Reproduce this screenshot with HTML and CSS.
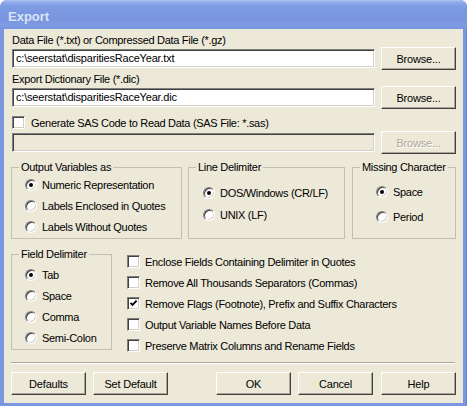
FILE: index.html
```html
<!DOCTYPE html>
<html>
<head>
<meta charset="utf-8">
<title>Export</title>
<link rel="stylesheet" href="styles.css">
</head>
<body>
<div class="window">
  <div class="titlebar"><span class="title">Export</span></div>
  <div class="frame">
    <div class="top">
      <div class="label">Data File (*.txt) or Compressed Data File (*.gz)</div>
      <div class="filerow">
        <div class="field">c:\seerstat\disparitiesRaceYear.txt</div>
        <div class="btn browse">Browse...</div>
      </div>
      <div class="label label2">Export Dictionary File (*.dic)</div>
      <div class="filerow">
        <div class="field">c:\seerstat\disparitiesRaceYear.dic</div>
        <div class="btn browse">Browse...</div>
      </div>
      <div class="check sas"><span class="box"></span><span>Generate SAS Code to Read Data (SAS File: *.sas)</span></div>
      <div class="filerow disrow">
        <div class="field disabled"></div>
        <div class="btn browse dis">Browse...</div>
      </div>
    </div>

    <div class="groups">
      <fieldset class="grp g-output">
        <legend>Output Variables as</legend>
        <div class="inner">
          <div class="opt"><span class="radio"><span class="dot"></span></span><span>Numeric Representation</span></div>
          <div class="opt"><span class="radio"></span><span>Labels Enclosed in Quotes</span></div>
          <div class="opt"><span class="radio"></span><span>Labels Without Quotes</span></div>
        </div>
      </fieldset>
      <fieldset class="grp g-line">
        <legend>Line Delimiter</legend>
        <div class="inner">
          <div class="opt"><span class="radio"><span class="dot"></span></span><span>DOS/Windows (CR/LF)</span></div>
          <div class="opt"><span class="radio"></span><span>UNIX (LF)</span></div>
        </div>
      </fieldset>
      <fieldset class="grp g-missing">
        <legend>Missing Character</legend>
        <div class="inner">
          <div class="opt"><span class="radio"><span class="dot"></span></span><span>Space</span></div>
          <div class="opt"><span class="radio"></span><span>Period</span></div>
        </div>
      </fieldset>
    </div>

    <div class="lower">
      <fieldset class="grp g-field">
        <legend>Field Delimiter</legend>
        <div class="inner">
          <div class="opt"><span class="radio"><span class="dot"></span></span><span>Tab</span></div>
          <div class="opt"><span class="radio"></span><span>Space</span></div>
          <div class="opt"><span class="radio"></span><span>Comma</span></div>
          <div class="opt"><span class="radio"></span><span>Semi-Colon</span></div>
        </div>
      </fieldset>
      <div class="checks">
        <div class="check"><span class="box"></span><span>Enclose Fields Containing Delimiter in Quotes</span></div>
        <div class="check"><span class="box"></span><span>Remove All Thousands Separators (Commas)</span></div>
        <div class="check"><span class="box"><svg width="9" height="9" viewBox="0 0 9 9"><polyline points="1.5,3.8 3.5,5.8 7.6,1.7" fill="none" stroke="#000" stroke-width="1.9"/></svg></span><span>Remove Flags (Footnote), Prefix and Suffix Characters</span></div>
        <div class="check"><span class="box"></span><span>Output Variable Names Before Data</span></div>
        <div class="check"><span class="box"></span><span>Preserve Matrix Columns and Rename Fields</span></div>
      </div>
    </div>

    <div class="sep"></div>

    <div class="buttons">
      <div class="btn">Defaults</div>
      <div class="btn">Set Default</div>
      <div class="btn ok">OK</div>
      <div class="btn">Cancel</div>
      <div class="btn help">Help</div>
    </div>
  </div>
</div>
</body>
</html>
```

FILE: styles.css
```css
html, body {
  margin: 0;
  padding: 0;
  background: #fff;
}
body {
  width: 467px;
  height: 406px;
  overflow: hidden;
  font-family: "Liberation Sans", Arial, sans-serif;
  font-size: 11px;
  letter-spacing: -0.3px;
  color: #000;
}
.window {
  width: 467px;
  height: 406px;
  display: flex;
  flex-direction: column;
  background: #7A96DF;
  border-radius: 7px 7px 0 0;
  overflow: hidden;
  box-shadow: inset -1px 0 0 #6A83D2;
}
.titlebar {
  height: 29px;
  flex: none;
  box-sizing: border-box;
  padding: 3px 0 0 8px;
  display: flex;
  align-items: center;
  background: linear-gradient(to bottom, #AFC3F2 0px, #95ADEC 2px, #81A0E6 5px, #7B98E1 10px, #7995DF 20px, #7F9BE3 25px, #7794DE 29px);
}
.title {
  font-family: "Liberation Sans", Arial, sans-serif;
  font-weight: bold;
  font-size: 13px;
  letter-spacing: 0;
  color: #D8E4F8;
}
.frame {
  flex: 1;
  margin: 0 4px 3px 4px;
  background: #ECE9D8;
  padding: 5px 7px 0 7px;
  display: flex;
  flex-direction: column;
}
.top {
  padding-left: 1px;
  display: flex;
  flex-direction: column;
}
.label {
  height: 13px;
  line-height: 13px;
}
.label2 {
  margin-top: 3px;
}
.filerow {
  display: flex;
  align-items: center;
  height: 23px;
  gap: 6px;
}
.field {
  box-sizing: border-box;
  width: 363px;
  height: 19px;
  background: #fff;
  border: 1px solid;
  border-color: #808080 #fff #fff #808080;
  box-shadow: inset 1px 1px 0 #404040, inset -1px -1px 0 #D4D0C8;
  padding: 0 3px;
  line-height: 17px;
  letter-spacing: -0.2px;
  white-space: nowrap;
}
.field.disabled {
  background: #ECE9D8;
}
.btn {
  box-sizing: border-box;
  width: 75px;
  height: 23px;
  flex: none;
  background: #ECE9D8;
  border: 1px solid;
  border-color: #fff #404040 #404040 #fff;
  box-shadow: inset -1px -1px 0 #ACA899;
  display: flex;
  align-items: center;
  justify-content: center;
  letter-spacing: -0.2px;
  white-space: nowrap;
}
.btn.dis {
  color: #ACA899;
  text-shadow: 1px 1px 0 #fff;
}
.check {
  display: flex;
  align-items: center;
  height: 21px;
  white-space: nowrap;
}
.check.sas {
  height: 13px;
  margin-top: 7px;
}
.disrow {
  margin-top: 2px;
}
.box {
  box-sizing: border-box;
  width: 13px;
  height: 13px;
  flex: none;
  margin-right: 6px;
  background: #fff;
  border: 1px solid;
  border-color: #808080 #fff #fff #808080;
  box-shadow: inset 1px 1px 0 #404040, inset -1px -1px 0 #D4D0C8;
  display: flex;
  align-items: center;
  justify-content: center;
}
.box svg {
  display: block;
}
.groups {
  display: flex;
  margin-top: 7px;
}
.grp {
  margin: 0;
  border: 1px solid #C3C0B0;
  box-sizing: border-box;
  min-width: 0;
  padding: 0;
  flex: none;
}
.grp legend {
  padding: 0 2px;
  margin: 0 auto 0 7px;
  line-height: 13px;
  height: 13px;
  white-space: nowrap;
}
.inner {
  display: flex;
  flex-direction: column;
}
.opt {
  display: flex;
  align-items: center;
  white-space: nowrap;
}
.radio {
  box-sizing: border-box;
  width: 12px;
  height: 12px;
  flex: none;
  margin-right: 5px;
  border-radius: 50%;
  background: #fff;
  border: 1px solid;
  border-color: #808080 #fff #fff #808080;
  box-shadow: inset 1px 1px 0 #404040, inset -1px -1px 0 #D4D0C8;
  display: flex;
  align-items: center;
  justify-content: center;
}
.dot {
  width: 4px;
  height: 4px;
  border-radius: 50%;
  background: #000;
}
.g-output {
  width: 171px;
}
.g-output .inner {
  padding: 0 0 1px 13px;
}
.g-output .opt {
  height: 21px;
}
.g-line {
  width: 157px;
  margin-left: 6px;
}
.g-line .inner {
  padding: 8px 0 0 14px;
}
.g-line .opt {
  height: 22px;
}
.g-missing {
  width: 104px;
  margin-left: 7px;
}
.g-missing .inner {
  padding: 5px 0 0 23px;
}
.g-missing .opt {
  height: 25px;
}
.lower {
  display: flex;
  align-items: flex-start;
  margin-top: 9px;
}
.g-field {
  width: 101px;
}
.g-field .inner {
  padding: 3px 0 1px 13px;
}
.g-field .opt {
  height: 21px;
}
.checks {
  margin-left: 15px;
  padding-top: 3px;
  display: flex;
  flex-direction: column;
}
.checks .box {
  margin-right: 5px;
}
.sep {
  margin-top: 6px;
  margin-right: 1px;
  height: 0;
  border-top: 1px solid #ACA899;
  border-bottom: 1px solid #fff;
}
.buttons {
  display: flex;
  gap: 7px;
  margin-top: 8px;
}
.ok {
  margin-left: auto;
}
.help {
  margin-left: 1px;
}
```
